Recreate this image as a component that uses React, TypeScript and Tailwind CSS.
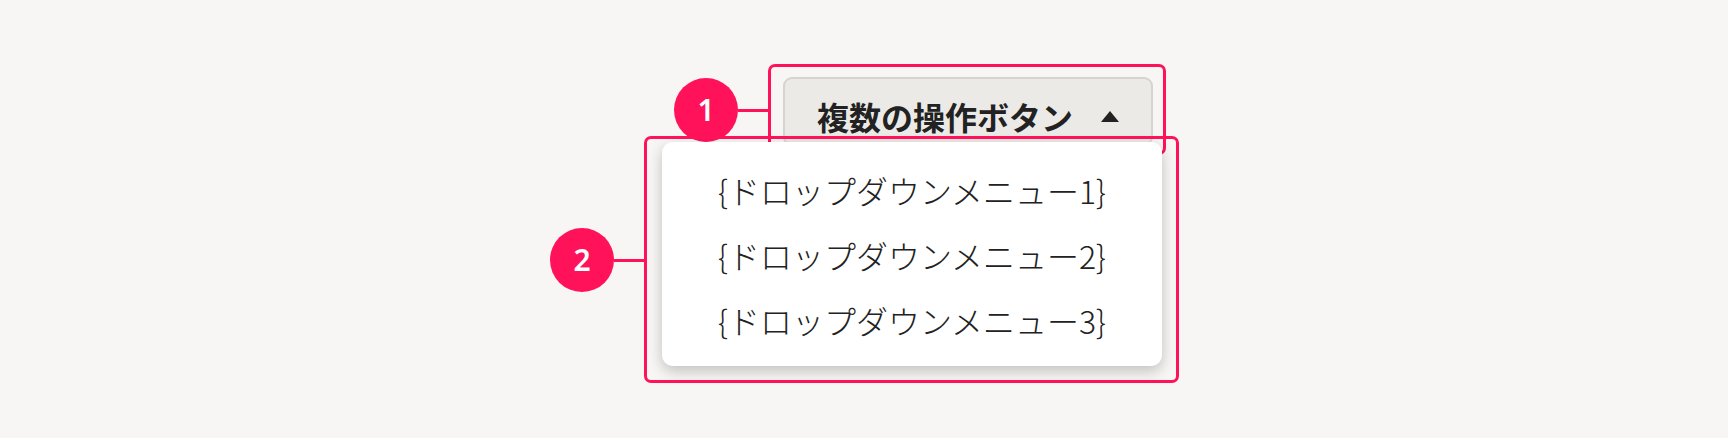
import React from "react";

const items = ["{ドロップダウンメニュー1}", "{ドロップダウンメニュー2}", "{ドロップダウンメニュー3}"];

const Badge = ({ n }: { n: string }) => (
  <div className="flex items-center">
    <div className="w-[64px] h-[64px] rounded-full bg-[#ff125a] flex items-center justify-center text-white text-[30px] font-semibold leading-none font-['Noto_Sans','Noto_Sans_CJK_JP',sans-serif]">
      {n}
    </div>
    <div className="w-[32px] h-[3px] bg-[#ff125a]" />
  </div>
);

export default function App() {
  return (
    <div className="w-full h-[438px] bg-[#f7f6f4] overflow-hidden font-['Noto_Sans_CJK_JP',sans-serif] text-[#222]">
      <div className="relative ml-[662px] pt-[77px] w-[500px]">
        {/* annotation 1 */}
        <div className="absolute left-[106px] top-[64px] w-[398px] h-[91px] border-[3px] border-[#ff125a] rounded-[7px]" />
        <div className="absolute left-[12px] top-[78px]">
          <Badge n="1" />
        </div>

        <button className="ml-[121px] w-[370px] h-[69px] flex items-center pt-[9px] pl-[32px] gap-[28px] bg-[#ebeae6] border-2 border-[#d6d4d0] rounded-[9px]">
          <span className="text-[32px] font-bold leading-none">複数の操作ボタン</span>
          <svg width="18" height="11" viewBox="0 0 18 11" className="mt-[1px]">
            <path d="M9 0 L18 11 L0 11 Z" fill="#222" />
          </svg>
        </button>

        <div className="relative z-10 -mt-[4px] w-[500px] h-[224px] bg-white rounded-[11px] shadow-[0_5px_14px_rgba(0,0,0,0.22)] pt-[15px] flex flex-col">
          {items.map((t) => (
            <div key={t} className="h-[65px] flex items-center justify-center text-[32px] font-light leading-none">
              {t}
            </div>
          ))}
        </div>

        {/* annotation 2 */}
        <div className="absolute z-20 left-[-18px] top-[136px] w-[535px] h-[247px] border-[3px] border-[#ff125a] rounded-[7px]" />
        <div className="absolute z-20 left-[-112px] top-[228px]">
          <Badge n="2" />
        </div>
      </div>
    </div>
  );
}
